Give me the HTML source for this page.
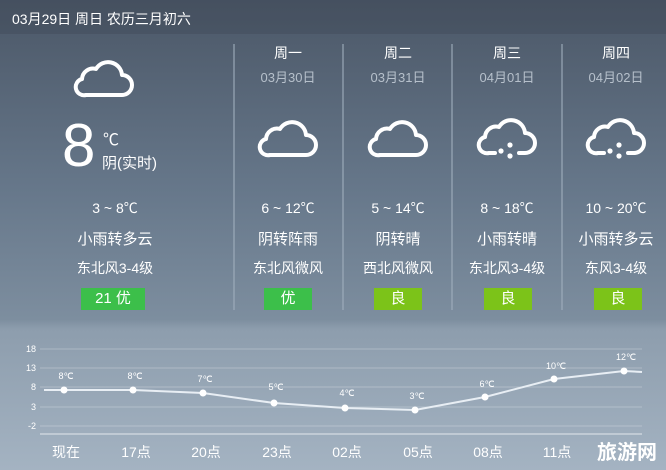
<!DOCTYPE html><html><head><meta charset="utf-8"><style>
body{margin:0;width:666px;height:470px;overflow:hidden;font-family:"Liberation Sans","Noto Sans CJK SC",sans-serif;color:#fff;position:relative;background:linear-gradient(#4b5767 0%,#66778a 40%,#7d8e9f 68%,#8d9dad 70%,#a4b3c2 100%)}
.a{position:absolute;text-align:center;white-space:nowrap}
.div{position:absolute;top:44px;width:2px;height:266px;background:rgba(160,175,190,.55)}
.aq{position:absolute;height:22px;line-height:22px;font-size:15px;text-align:center}
</style></head><body>
<div style="position:absolute;left:0;top:0;width:666px;height:34px;background:rgba(60,68,82,.35)"></div>
<div class="a" style="left:12px;top:9px;font-size:14px">03月29日 周日 农历三月初六</div>
<div class="div" style="left:233px"></div><div class="div" style="left:342px"></div><div class="div" style="left:451px"></div><div class="div" style="left:561px"></div>
<svg width="0" height="0" style="position:absolute"><defs>
<path id="cl" d="M14 40 H50 A10 10 0 0 0 50 20 A14 14 0 0 0 24 14 A11 11 0 0 0 10 24 A8 8 0 0 0 14 40 Z" fill="none" stroke="#fff" stroke-width="4" stroke-linejoin="round"/>
<g id="rc"><path d="M20 40 H14 A8 8 0 0 1 10 24 A11 11 0 0 1 24 14 A14 14 0 0 1 50 20 A10 10 0 0 1 50 40 H44" fill="none" stroke="#fff" stroke-width="4" stroke-linecap="round" stroke-linejoin="round"/><g fill="#fff"><circle cx="26" cy="38" r="2.6"/><circle cx="35" cy="32" r="2.6"/><circle cx="35" cy="43" r="2.6"/></g></g>
</defs></svg>
<svg class="a" style="left:72px;top:55px" width="64" height="48"><use href="#cl"/></svg>
<div class="a" style="left:62px;top:114px;font-size:60px;line-height:64px">8</div>
<div class="a" style="left:103px;top:126px;font-size:16px">℃</div>
<div class="a" style="left:102px;top:152px;font-size:15px">阴(实时)</div>
<div class="a" style="left:55px;width:120px;top:198px;font-size:14px">3 ~ 8℃</div>
<div class="a" style="left:55px;width:120px;top:228px;font-size:15px">小雨转多云</div>
<div class="a" style="left:55px;width:120px;top:258px;font-size:14px">东北风3-4级</div>
<div class="aq" style="left:81px;width:64px;top:288px;background:#3cbf4a">21 优</div>

<div class="a" style="left:238px;width:100px;top:43px;font-size:14px">周一</div>
<div class="a" style="left:238px;width:100px;top:67px;font-size:13px;color:#b6c0cb">03月30日</div>
<svg class="a" style="left:256px;top:115px" width="64" height="48"><use href="#cl"/></svg>
<div class="a" style="left:238px;width:100px;top:198px;font-size:14px">6 ~ 12℃</div>
<div class="a" style="left:238px;width:100px;top:228px;font-size:15px">阴转阵雨</div>
<div class="a" style="left:238px;width:100px;top:258px;font-size:14px">东北风微风</div>
<div class="aq" style="left:264px;width:48px;top:288px;background:#3cbf4a">优</div>

<div class="a" style="left:348px;width:100px;top:43px;font-size:14px">周二</div>
<div class="a" style="left:348px;width:100px;top:67px;font-size:13px;color:#b6c0cb">03月31日</div>
<svg class="a" style="left:366px;top:115px" width="64" height="48"><use href="#cl"/></svg>
<div class="a" style="left:348px;width:100px;top:198px;font-size:14px">5 ~ 14℃</div>
<div class="a" style="left:348px;width:100px;top:228px;font-size:15px">阴转晴</div>
<div class="a" style="left:348px;width:100px;top:258px;font-size:14px">西北风微风</div>
<div class="aq" style="left:374px;width:48px;top:288px;background:#7cc319">良</div>

<div class="a" style="left:457px;width:100px;top:43px;font-size:14px">周三</div>
<div class="a" style="left:457px;width:100px;top:67px;font-size:13px;color:#b6c0cb">04月01日</div>
<svg class="a" style="left:475px;top:113px" width="64" height="52"><use href="#rc"/></svg>
<div class="a" style="left:457px;width:100px;top:198px;font-size:14px">8 ~ 18℃</div>
<div class="a" style="left:457px;width:100px;top:228px;font-size:15px">小雨转晴</div>
<div class="a" style="left:457px;width:100px;top:258px;font-size:14px">东北风3-4级</div>
<div class="aq" style="left:484px;width:48px;top:288px;background:#7cc319">良</div>

<div class="a" style="left:566px;width:100px;top:43px;font-size:14px">周四</div>
<div class="a" style="left:566px;width:100px;top:67px;font-size:13px;color:#b6c0cb">04月02日</div>
<svg class="a" style="left:584px;top:113px" width="64" height="52"><use href="#rc"/></svg>
<div class="a" style="left:566px;width:100px;top:198px;font-size:14px">10 ~ 20℃</div>
<div class="a" style="left:566px;width:100px;top:228px;font-size:15px">小雨转多云</div>
<div class="a" style="left:566px;width:100px;top:258px;font-size:14px">东风3-4级</div>
<div class="aq" style="left:594px;width:48px;top:288px;background:#7cc319">良</div>

<svg class="a" style="left:0;top:320px;text-align:left" width="666" height="150" font-family="Liberation Sans" font-size="9" fill="#fff">
<g stroke="rgba(255,255,255,.25)" stroke-width="1"><line x1="40" x2="642" y1="29" y2="29"/><line x1="40" x2="642" y1="48" y2="48"/><line x1="40" x2="642" y1="67" y2="67"/><line x1="40" x2="642" y1="87" y2="87"/><line x1="40" x2="642" y1="106" y2="106"/></g>
<line x1="40" x2="642" y1="114" y2="114" stroke="rgba(255,255,255,.7)"/>
<g text-anchor="end"><text x="36" y="32">18</text><text x="36" y="51">13</text><text x="36" y="70">8</text><text x="36" y="90">3</text><text x="36" y="109">-2</text></g>
<polyline points="44,70 64,70 133,70 203,73 274,83 345,88 415,90 485,77 554,59 624,51 642,52" fill="none" stroke="#e8eef4" stroke-width="2"/>
<g fill="#fff"><circle cx="64" cy="70" r="3.5"/><circle cx="133" cy="70" r="3.5"/><circle cx="203" cy="73" r="3.5"/><circle cx="274" cy="83" r="3.5"/><circle cx="345" cy="88" r="3.5"/><circle cx="415" cy="90" r="3.5"/><circle cx="485" cy="77" r="3.5"/><circle cx="554" cy="59" r="3.5"/><circle cx="624" cy="51" r="3.5"/></g>
<g text-anchor="middle"><text x="66" y="59">8℃</text><text x="135" y="59">8℃</text><text x="205" y="62">7℃</text><text x="276" y="70">5℃</text><text x="347" y="76">4℃</text><text x="417" y="79">3℃</text><text x="487" y="67">6℃</text><text x="556" y="49">10℃</text><text x="626" y="40">12℃</text></g>
<g text-anchor="middle" font-size="14" font-family="Liberation Sans,Noto Sans CJK SC,sans-serif"><text x="66" y="137">现在</text><text x="136" y="137">17点</text><text x="206" y="137">20点</text><text x="277" y="137">23点</text><text x="347" y="137">02点</text><text x="418" y="137">05点</text><text x="488" y="137">08点</text><text x="557" y="137">11点</text><text x="627" y="139" font-size="20" font-weight="bold">旅游网</text></g>
</svg>
</body></html>
